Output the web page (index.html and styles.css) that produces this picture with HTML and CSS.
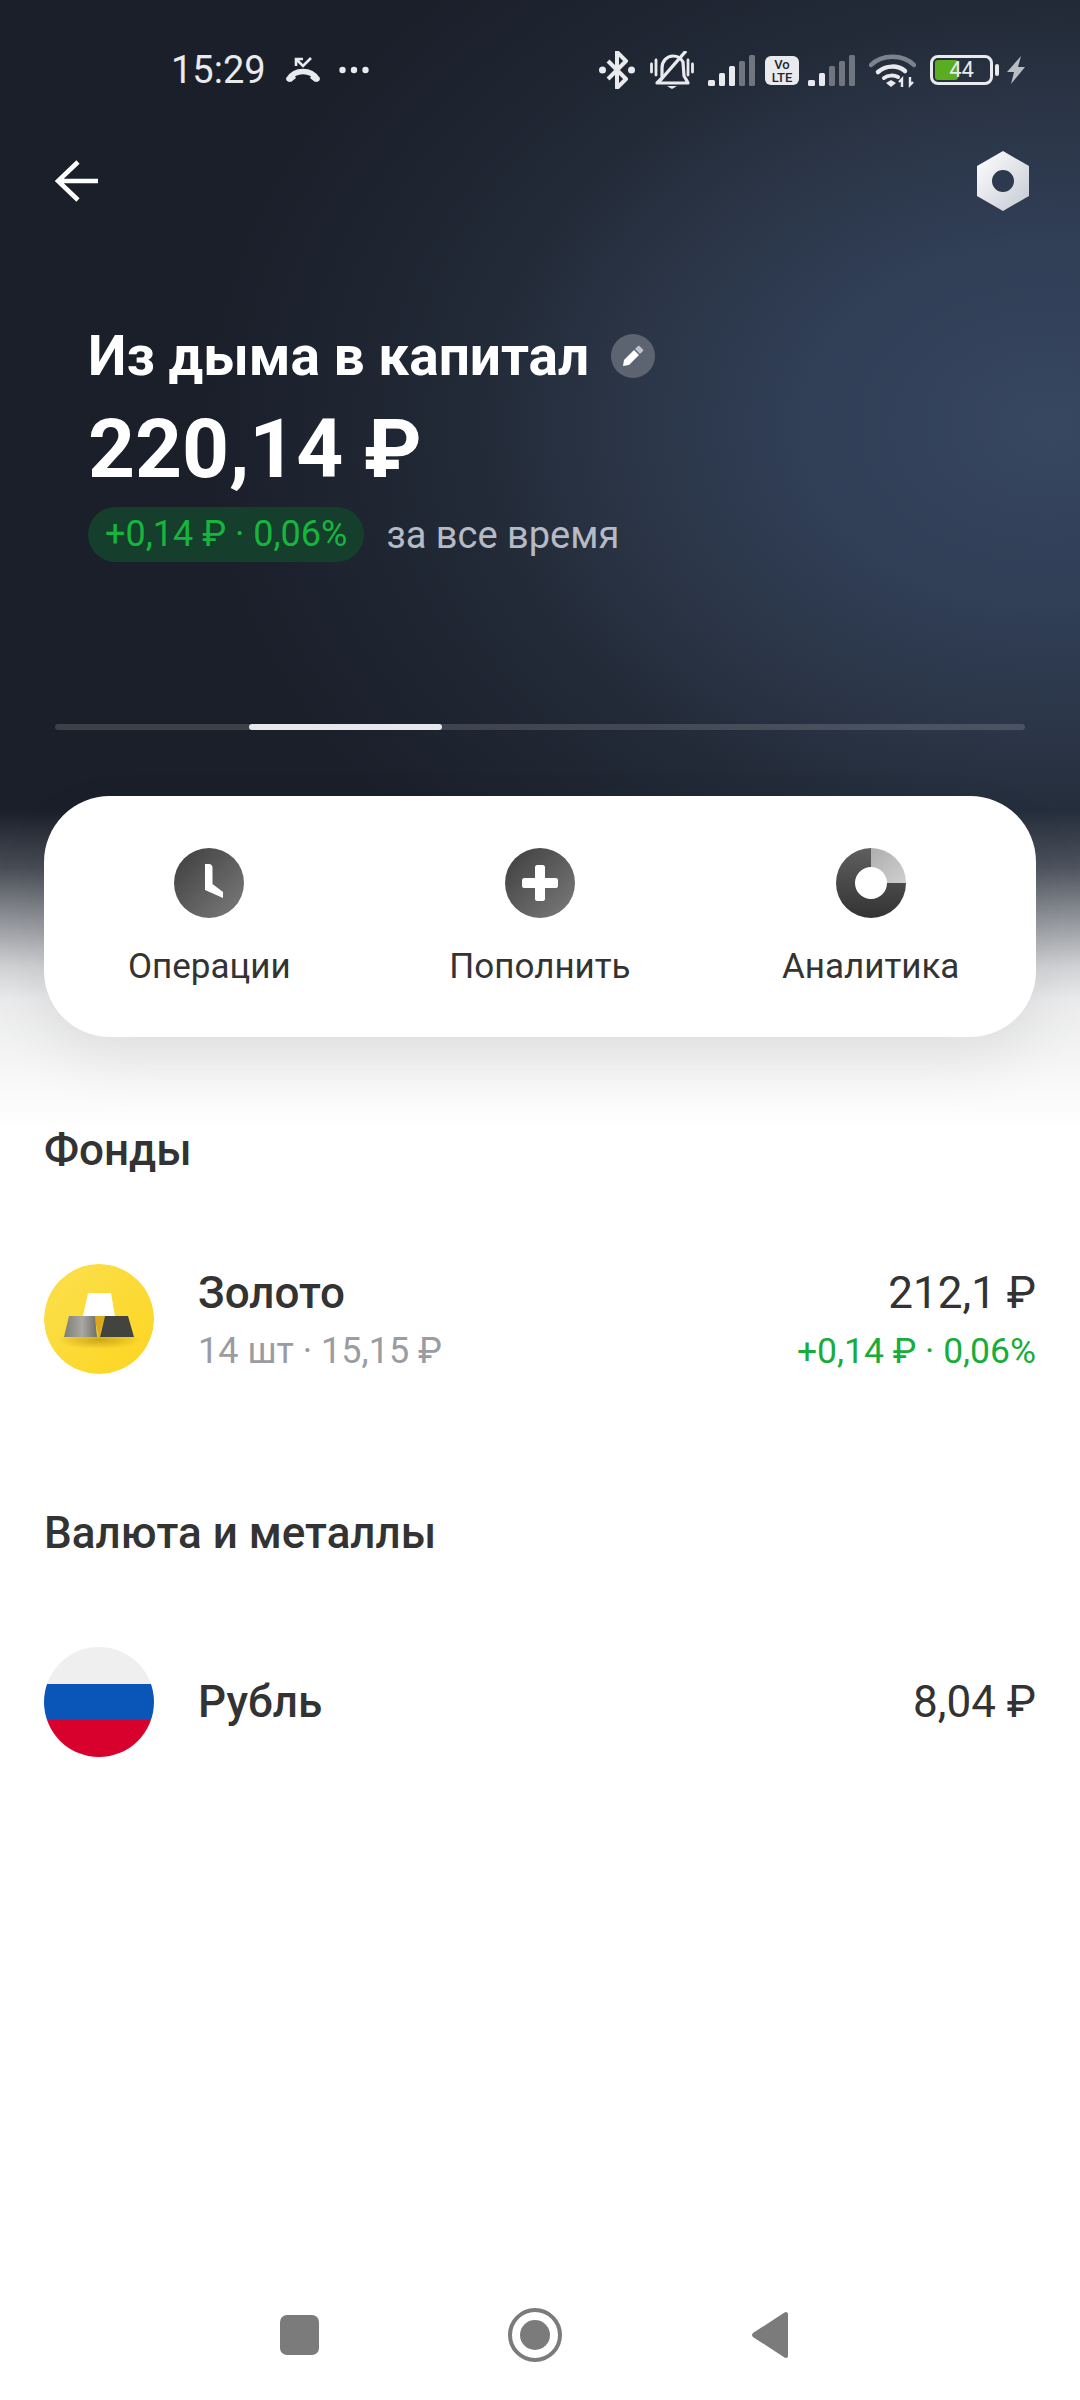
FILE: index.html
```html
<!DOCTYPE html>
<html lang="ru">
<head>
<meta charset="utf-8">
<title>Из дыма в капитал</title>
<link rel="stylesheet" href="styles.css">
</head>
<body>
<div class="page">
  <div class="hero-bg"></div>
  <header class="status">
    <span class="time">15:29</span>
    <svg class="ic-call" viewBox="0 0 36 26"><path d="M4 22C10 12 26 12 32 22" fill="none" stroke="#e8eaed" stroke-width="5.500" stroke-linecap="round"/><path d="M1 21l7-5 3 5-5 4zM35 21l-7-5-3 5 5 4z" fill="#e8eaed"/><path d="M11 9V2h7M11 2l7 7L26 1" fill="none" stroke="#e8eaed" stroke-width="2.600"/></svg>
    <svg class="ic-dots" viewBox="0 0 30 8"><circle cx="3.500" cy="4" r="3.200"/><circle cx="15" cy="4" r="3.200"/><circle cx="26.500" cy="4" r="3.200"/></svg>
    <div class="status-right">
      <svg class="ic-bt" viewBox="0 0 36 38"><path d="M9 10l18 18-9 9V1l9 9L9 28" fill="none" stroke="#e8eaed" stroke-width="4" stroke-linejoin="round"/><circle cx="3.500" cy="19" r="3.500" fill="#e8eaed"/><circle cx="32.500" cy="19" r="3.500" fill="#e8eaed"/></svg>
      <svg class="ic-bell" viewBox="0 0 44 38"><path d="M12 27V17c0-7 5-12 11-12 5 0 8 2 10 6l1 14 3 5 1 2H7l5-5z" fill="none" stroke="#e8eaed" stroke-width="3.200" stroke-linejoin="round"/><path d="M17 35h10l-5 3z" fill="#e8eaed"/><path d="M36 0L8 32" stroke="#e8eaed" stroke-width="3.400"/><path d="M1.500 13v8M6 9v15M38 9v15M42.500 13v8" stroke="#e8eaed" stroke-width="2.800" stroke-linecap="round"/></svg>
      <svg class="ic-signal" viewBox="0 0 48 31"><rect x="0" y="25" width="7" height="6" rx="1.500" fill="#e8eaed"/><rect x="11" y="18" width="6" height="13" rx="1.500" fill="#e8eaed"/><rect x="21" y="11" width="6" height="20" rx="1.500" fill="#e8eaed"/><rect x="31" y="6" width="6" height="25" rx="1.500" fill="#6f7680"/><rect x="41" y="0" width="6" height="31" rx="1.500" fill="#6f7680"/></svg>
      <span class="volte">Vo<br>LTE</span>
      <svg class="ic-signal" viewBox="0 0 48 31"><rect x="0" y="25" width="7" height="6" rx="1.500" fill="#e8eaed"/><rect x="11" y="18" width="6" height="13" rx="1.500" fill="#e8eaed"/><rect x="21" y="11" width="6" height="20" rx="1.500" fill="#6f7680"/><rect x="31" y="6" width="6" height="25" rx="1.500" fill="#6f7680"/><rect x="41" y="0" width="6" height="31" rx="1.500" fill="#6f7680"/></svg>
      <svg class="ic-wifi" viewBox="0 0 47 35"><path d="M2 12C13 1 34 1 45 12" fill="none" stroke="#7d838c" stroke-width="4.500" stroke-linecap="round"/><path d="M9 19c8-7 20-7 27-1" fill="none" stroke="#e8eaed" stroke-width="4.500" stroke-linecap="round"/><path d="M15 25c4-3 10-3 14-1" fill="none" stroke="#e8eaed" stroke-width="4" stroke-linecap="round"/><path d="M17 30l5-3 5 3-5 4z" fill="#e8eaed"/><path d="M33 34v-8l-3 3M41 24v8l3-3" fill="none" stroke="#e8eaed" stroke-width="2.400"/></svg>
      <div class="battery"><div class="battery-body"><span class="battery-fill"></span><span class="battery-num">44</span></div><span class="battery-tip"></span></div>
      <svg class="ic-bolt" viewBox="0 0 18 28"><path d="M14 0L0 16h7L4 28l14-17h-7z" fill="#b9bdc4"/></svg>
    </div>
  </header>
  <nav class="topbar">
    <svg class="ic-back" viewBox="0 0 44 42"><path d="M43 21H3M23 2L3 21l20 19" fill="none" stroke="#fff" stroke-width="4.600"/></svg>
    <svg class="ic-nut" viewBox="0 0 52 60"><defs><linearGradient id="nut" x1="0" y1="0" x2="1" y2="1"><stop offset="0" stop-color="#fff"/><stop offset="1" stop-color="#c4c9d3"/></linearGradient></defs><path fill-rule="evenodd" d="M26 0l26 15v30L26 60 0 45V15zM26 19a11 11 0 1 0 0 22 11 11 0 0 0 0-22z" fill="url(#nut)"/></svg>
  </nav>
  <section class="summary">
    <div class="title-row">
      <h1 class="title">Из дыма в капитал</h1>
      <span class="edit"><svg viewBox="0 0 22 22"><path d="M1 21l1-6L12 5l5 5L7 20z" fill="#fff"/><path d="M13 4l3-3c.500-.500 1-.500 1.500 0l3.500 3.500c.500.500.500 1 0 1.500l-3 3z" fill="#bfc3ca"/></svg></span>
    </div>
    <div class="amount">220,14 ₽</div>
    <div class="change-row">
      <span class="pill">+0,14 ₽ · 0,06%</span>
      <span class="period">за все время</span>
    </div>
  </section>
  <div class="progress"><span class="progress-thumb"></span></div>
  <section class="actions">
    <div class="action">
      <svg class="action-ic" viewBox="0 0 70 70"><defs><linearGradient id="g1" x1="0" y1="0" x2="1" y2="1"><stop offset="0" stop-color="#3d3d3d"/><stop offset="1" stop-color="#7c7c7c"/></linearGradient></defs><circle cx="35" cy="35" r="35" fill="url(#g1)"/><path d="M31 16h4c2 0 3.500 1.500 3.500 3.500V36L49 44v6l-18-8z" fill="#fff"/></svg>
      <span class="action-label">Операции</span>
    </div>
    <div class="action">
      <svg class="action-ic" viewBox="0 0 70 70"><circle cx="35" cy="35" r="35" fill="url(#g1)"/><path d="M30 19c0-1 1-2 2-2h6c1 0 2 1 2 2v11h11c1 0 2 1 2 2v6c0 1-1 2-2 2H40v11c0 1-1 2-2 2h-6c-1 0-2-1-2-2V40H19c-1 0-2-1-2-2v-6c0-1 1-2 2-2h11z" fill="#fff"/></svg>
      <span class="action-label">Пополнить</span>
    </div>
    <div class="action">
      <svg class="action-ic" viewBox="0 0 70 70"><defs><linearGradient id="g2" x1="0" y1="0" x2="0" y2="1"><stop offset="0" stop-color="#5f5f5f"/><stop offset="1" stop-color="#333"/></linearGradient><linearGradient id="g3" x1="0" y1="0" x2="1" y2="1"><stop offset="0" stop-color="#aeaeae"/><stop offset="1" stop-color="#cfcfcf"/></linearGradient></defs><path d="M35 0a35 35 0 1 0 35 35H51a16 16 0 1 1-16-16z" fill="url(#g2)"/><path d="M35 0a35 35 0 0 1 35 35H51a16 16 0 0 0-16-16z" fill="url(#g3)"/></svg>
      <span class="action-label">Аналитика</span>
    </div>
  </section>
  <main class="lists">
    <h2 class="section-title first">Фонды</h2>
    <div class="row">
      <svg class="avatar" viewBox="0 0 110 110"><defs><linearGradient id="gold" x1="0" y1="0" x2="1" y2="1"><stop offset="0" stop-color="#fbe04f"/><stop offset="1" stop-color="#fdd51f"/></linearGradient><linearGradient id="bar1" x1="0" y1="0" x2="1" y2="0"><stop offset="0" stop-color="#7d7d79"/><stop offset=".55" stop-color="#a8a7a1"/><stop offset="1" stop-color="#70706a"/></linearGradient><radialGradient id="sh" cx=".5" cy=".5" r=".5"><stop offset="0" stop-color="#a67f00" stop-opacity=".55"/><stop offset="1" stop-color="#a67f00" stop-opacity="0"/></radialGradient></defs><circle cx="55" cy="55" r="55" fill="url(#gold)"/><ellipse cx="55" cy="76" rx="42" ry="9" fill="url(#sh)"/><path d="M44 29h23l4 23H39z" fill="#fff"/><path d="M50 52h11l-6 21z" fill="#dba81e"/><path d="M25 52h26l2 21H20z" fill="url(#bar1)"/><path d="M61 52h23l6 21H56z" fill="#44443f"/></svg>
      <div class="row-main">
        <div class="row-name">Золото</div>
        <div class="row-sub">14 шт · 15,15 ₽</div>
      </div>
      <div class="row-side">
        <div class="row-value">212,1 ₽</div>
        <div class="row-gain">+0,14 ₽ · 0,06%</div>
      </div>
    </div>
    <h2 class="section-title">Валюта и металлы</h2>
    <div class="row">
      <span class="avatar flag"></span>
      <div class="row-main"><div class="row-name">Рубль</div></div>
      <div class="row-side"><div class="row-value">8,04 ₽</div></div>
    </div>
  </main>
  <footer class="navbar">
    <span class="nav-square"></span>
    <span class="nav-home"><span class="nav-dot"></span></span>
    <svg class="nav-back" viewBox="0 0 36 46"><path d="M34 0c1 0 2 1 2 2v42c0 1-1 2-2 2-.5 0-1-.2-1.500-.5L1 25c-1.300-1-1.300-3 0-4L32.500.5c.5-.3 1-.5 1.500-.5z" fill="#7b7b7b"/></svg>
  </footer>
</div>
</body>
</html>
```

FILE: styles.css
```css
* { box-sizing: border-box; }
html, body { margin: 0; padding: 0; background: #fff; }
body { font-family: Roboto, "Noto Sans", sans-serif; color: #333; }
.page { position: relative; width: 1080px; height: 2400px; display: flex; flex-direction: column; overflow: hidden; }
.hero-bg {
  position: absolute; left: 0; top: 0; width: 1080px; height: 1130px;
  background:
    linear-gradient(to bottom, rgba(255,255,255,0) 810px, rgba(255,255,255,.2) 867px, rgba(255,255,255,.5) 917px, rgba(255,255,255,.8) 967px, rgba(255,255,255,.91) 1000px, rgba(255,255,255,.97) 1080px, #fff 1130px),
    radial-gradient(ellipse 850px 620px at 1050px 425px, #37475f 0, #303e56 30%, #2a3445 52%, #222a37 68%, #1a1f2a 100%);
}
.status, .topbar, .summary, .progress, .actions, .lists, .navbar { position: relative; }
.status { display: flex; align-items: center; height: 40px; margin-top: 50px; padding-left: 171px; padding-right: 55px; color: #e8eaed; }
.time { font-size: 38px; line-height: 40px; margin-right: 19px; }
.ic-call { width: 36px; height: 26px; margin-right: 18px; }
.ic-dots { width: 30px; height: 8px; fill: #e8eaed; }
.status-right { margin-left: auto; display: flex; align-items: center; }
.ic-bt { width: 36px; height: 38px; margin-right: 15px; }
.ic-bell { width: 44px; height: 38px; margin-right: 14px; }
.ic-signal { width: 48px; height: 31px; }
.volte { width: 34px; height: 29px; margin: 0 9px; background: #e8eaed; border-radius: 6px; color: #1f2530; font-size: 13px; font-weight: 500; line-height: 13px; text-align: center; padding-top: 2px; }
.ic-wifi { width: 47px; height: 35px; margin: 0 14px 0 13px; }
.battery { display: flex; align-items: center; width: 70px; margin-right: 7px; }
.battery-body { position: relative; width: 63px; height: 30px; border: 3px solid #e8eaed; border-radius: 8px; overflow: hidden; }
.battery-fill { position: absolute; left: 2px; top: 2px; bottom: 2px; width: 23px; background: #5aad21; border-radius: 3px; }
.battery-num { position: relative; display: block; text-align: center; font-size: 22px; line-height: 24px; color: #e8eaed; }
.battery-tip { width: 4px; height: 12px; margin-left: 2px; background: #e8eaed; border-radius: 2px; }
.ic-bolt { width: 18px; height: 28px; }

.topbar { display: flex; justify-content: space-between; align-items: center; height: 60px; margin-top: 61px; padding: 0 51px 0 55px; }
.ic-back { width: 44px; height: 42px; }
.ic-nut { width: 52px; height: 60px; }

.summary { padding-left: 88px; margin-top: 115px; }
.title-row { display: flex; align-items: center; height: 60px; }
.title { margin: 0; font-size: 55px; font-weight: 700; color: #fff; line-height: 60px; white-space: nowrap; }
.edit { width: 44px; height: 44px; margin-left: 22px; border-radius: 50%; background: #5d6471; display: flex; align-items: center; justify-content: center; }
.edit svg { width: 22px; height: 22px; }
.amount { margin-top: 18px; font-size: 82px; line-height: 90px; font-weight: 700; color: #fff; white-space: nowrap; }
.change-row { display: flex; align-items: center; margin-top: 13px; }
.pill { height: 55px; padding: 0 17px; border-radius: 28px; background: #153f2c; color: #17b53e; font-size: 36px; line-height: 55px; white-space: nowrap; }
.period { margin-left: 22px; color: #b5bac5; font-size: 38px; }

.progress { height: 6px; margin: 162px 55px 0; background: rgba(255,255,255,.15); border-radius: 3px; }
.progress-thumb { position: absolute; left: 194px; top: 0; width: 193px; height: 6px; background: #e6e8ec; border-radius: 3px; }

.actions { display: grid; grid-template-columns: repeat(3, 1fr); height: 241px; margin: 66px 44px 0; padding-top: 52px; background: #fff; border-radius: 66px; box-shadow: 0 24px 60px rgba(0,0,0,.07); }
.action { display: flex; flex-direction: column; align-items: center; }
.action-ic { width: 70px; height: 70px; }
.action-label { margin-top: 27px; font-size: 35px; line-height: 44px; color: #333; white-space: nowrap; }

.lists { padding: 0 44px; }
.section-title { margin: 0; font-size: 44px; font-weight: 500; line-height: 50px; color: #333; }
.section-title.first { margin-top: 88px; }
.section-title:not(.first) { margin-top: 134px; }
.row { display: flex; align-items: center; height: 110px; margin-top: 89px; }
.avatar { width: 110px; height: 110px; flex: none; border-radius: 50%; }
.flag { background: linear-gradient(to bottom, #efefef 0, #efefef 33.3%, #0a56b8 33.3%, #0a56b8 66.6%, #d8002c 66.6%, #d8002c 100%); }
.row-main { margin-left: 44px; }
.row-name { font-size: 44px; font-weight: 500; line-height: 50px; color: #333; }
.row-name:not(:only-child), .row-value:not(:only-child) { margin-top: 2px; }
.row-sub { margin-top: 11px; font-size: 36px; line-height: 44px; color: #9a9ca2; white-space: nowrap; }
.row-side { margin-left: auto; text-align: right; }
.row-value { font-size: 44px; line-height: 50px; color: #333; white-space: nowrap; }
.row-gain { margin-top: 11px; font-size: 35.500px; line-height: 44px; color: #17ad3a; white-space: nowrap; }

.navbar { margin-top: auto; height: 130px; }
.nav-square { position: absolute; left: 280px; top: 45px; width: 39px; height: 40px; background: #7b7b7b; border-radius: 7px; }
.nav-home { position: absolute; left: 508px; top: 38px; width: 54px; height: 54px; border: 4px solid #7b7b7b; border-radius: 50%; display: flex; align-items: center; justify-content: center; }
.nav-dot { width: 30px; height: 30px; border-radius: 50%; background: #7b7b7b; }
.nav-back { position: absolute; left: 752px; top: 42px; width: 36px; height: 46px; }
```
